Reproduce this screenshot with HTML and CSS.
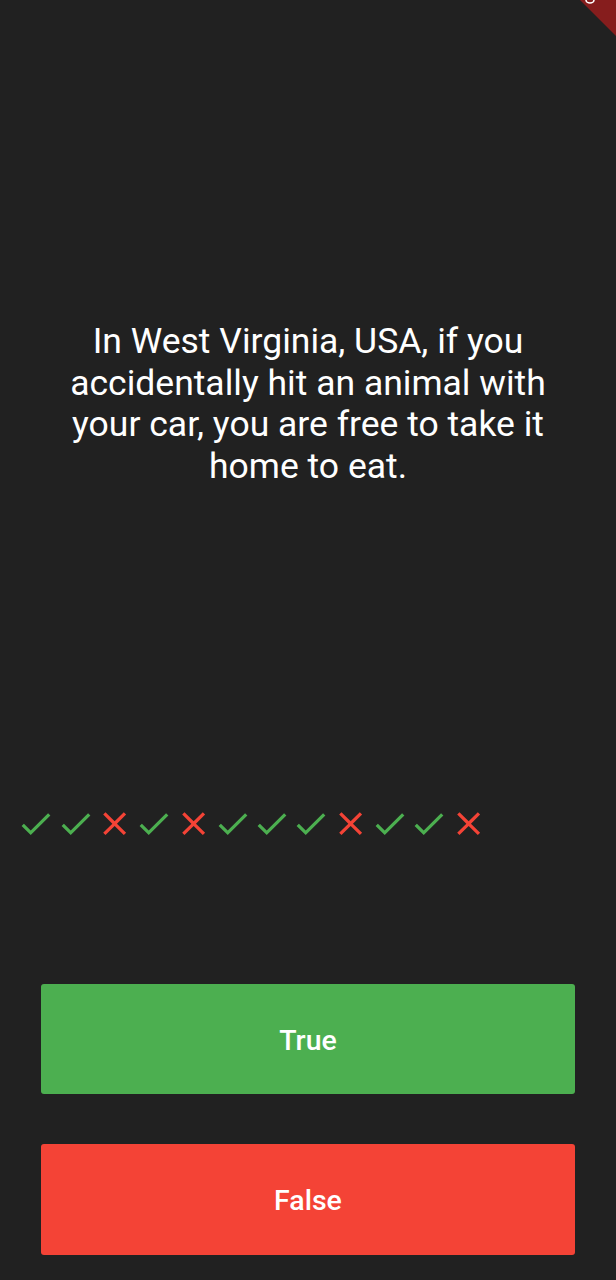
FILE: index.html
```html
<!DOCTYPE html>
<html lang="en">
<head>
<meta charset="utf-8">
<title>Quizzler</title>
<link rel="stylesheet" href="styles.css">
</head>
<body>
<div class="app">
  <section class="question">
    <p class="question-text">In West Virginia, USA, if you accidentally hit an animal with your car, you are free to take it home to eat.</p>
  </section>
  <div class="score">
    <svg class="icon ok" viewBox="0 0 24 24"><path d="M9 16.17L4.83 12l-1.42 1.41L9 19 21 7l-1.41-1.41z"/></svg>
    <svg class="icon ok" viewBox="0 0 24 24"><path d="M9 16.17L4.83 12l-1.42 1.41L9 19 21 7l-1.41-1.41z"/></svg>
    <svg class="icon bad" viewBox="0 0 24 24"><path d="M19 6.41L17.59 5 12 10.59 6.41 5 5 6.41 10.59 12 5 17.59 6.41 19 12 13.41 17.59 19 19 17.59 13.41 12z"/></svg>
    <svg class="icon ok" viewBox="0 0 24 24"><path d="M9 16.17L4.83 12l-1.42 1.41L9 19 21 7l-1.41-1.41z"/></svg>
    <svg class="icon bad" viewBox="0 0 24 24"><path d="M19 6.41L17.59 5 12 10.59 6.41 5 5 6.41 10.59 12 5 17.59 6.41 19 12 13.41 17.59 19 19 17.59 13.41 12z"/></svg>
    <svg class="icon ok" viewBox="0 0 24 24"><path d="M9 16.17L4.83 12l-1.42 1.41L9 19 21 7l-1.41-1.41z"/></svg>
    <svg class="icon ok" viewBox="0 0 24 24"><path d="M9 16.17L4.83 12l-1.42 1.41L9 19 21 7l-1.41-1.41z"/></svg>
    <svg class="icon ok" viewBox="0 0 24 24"><path d="M9 16.17L4.83 12l-1.42 1.41L9 19 21 7l-1.41-1.41z"/></svg>
    <svg class="icon bad" viewBox="0 0 24 24"><path d="M19 6.41L17.59 5 12 10.59 6.41 5 5 6.41 10.59 12 5 17.59 6.41 19 12 13.41 17.59 19 19 17.59 13.41 12z"/></svg>
    <svg class="icon ok" viewBox="0 0 24 24"><path d="M9 16.17L4.83 12l-1.42 1.41L9 19 21 7l-1.41-1.41z"/></svg>
    <svg class="icon ok" viewBox="0 0 24 24"><path d="M9 16.17L4.83 12l-1.42 1.41L9 19 21 7l-1.41-1.41z"/></svg>
    <svg class="icon bad" viewBox="0 0 24 24"><path d="M19 6.41L17.59 5 12 10.59 6.41 5 5 6.41 10.59 12 5 17.59 6.41 19 12 13.41 17.59 19 19 17.59 13.41 12z"/></svg>
  </div>
  <div class="answers">
    <button class="btn btn-true" type="button">True</button>
    <button class="btn btn-false" type="button">False</button>
  </div>
  <svg class="debug-banner" viewBox="0 0 40 40" aria-hidden="true">
    <polygon points="4,0 40,0 40,36" fill="#861d1d"/>
    <ellipse cx="14" cy="0" rx="4" ry="3" fill="none" stroke="#ffffff" stroke-width="1.6"/>
  </svg>
</div>
</body>
</html>
```
FILE: styles.css
```css
* { box-sizing: border-box; }
html, body {
  margin: 0;
  padding: 0;
  background: #212121;
}
.app {
  position: relative;
  width: 616px;
  height: 1280px;
  display: flex;
  flex-direction: column;
  overflow: hidden;
  font-family: Roboto, "Noto Sans", sans-serif;
}
.question {
  height: 804px;
  display: flex;
  align-items: center;
  justify-content: center;
  padding: 4px 43px 0;
}
.question-text {
  margin: 0;
  color: #ffffff;
  font-size: 35.5px;
  line-height: 41.5px;
  text-align: center;
  font-weight: 400;
}
.score {
  display: flex;
  padding-left: 16.4px;
  height: 40px;
}
.icon {
  width: 39.3px;
  height: 39.3px;
  flex: none;
}
.icon.ok { fill: #4caf50; }
.icon.bad { fill: #f44336; }
.answers {
  display: flex;
  flex-direction: column;
  gap: 50px;
  padding: 140px 41px 25px;
}
.btn {
  height: 110px;
  border: none;
  border-radius: 3px;
  color: #ffffff;
  font-family: Roboto, "Noto Sans", sans-serif;
  font-size: 28.5px;
  font-weight: 500;
  padding: 2px 0 0;
}
.btn-true { background: #4caf50; }
.btn-false { background: #f44336; height: 111px; }
.debug-banner {
  position: absolute;
  top: 0;
  right: 0;
  width: 40px;
  height: 40px;
}
```
